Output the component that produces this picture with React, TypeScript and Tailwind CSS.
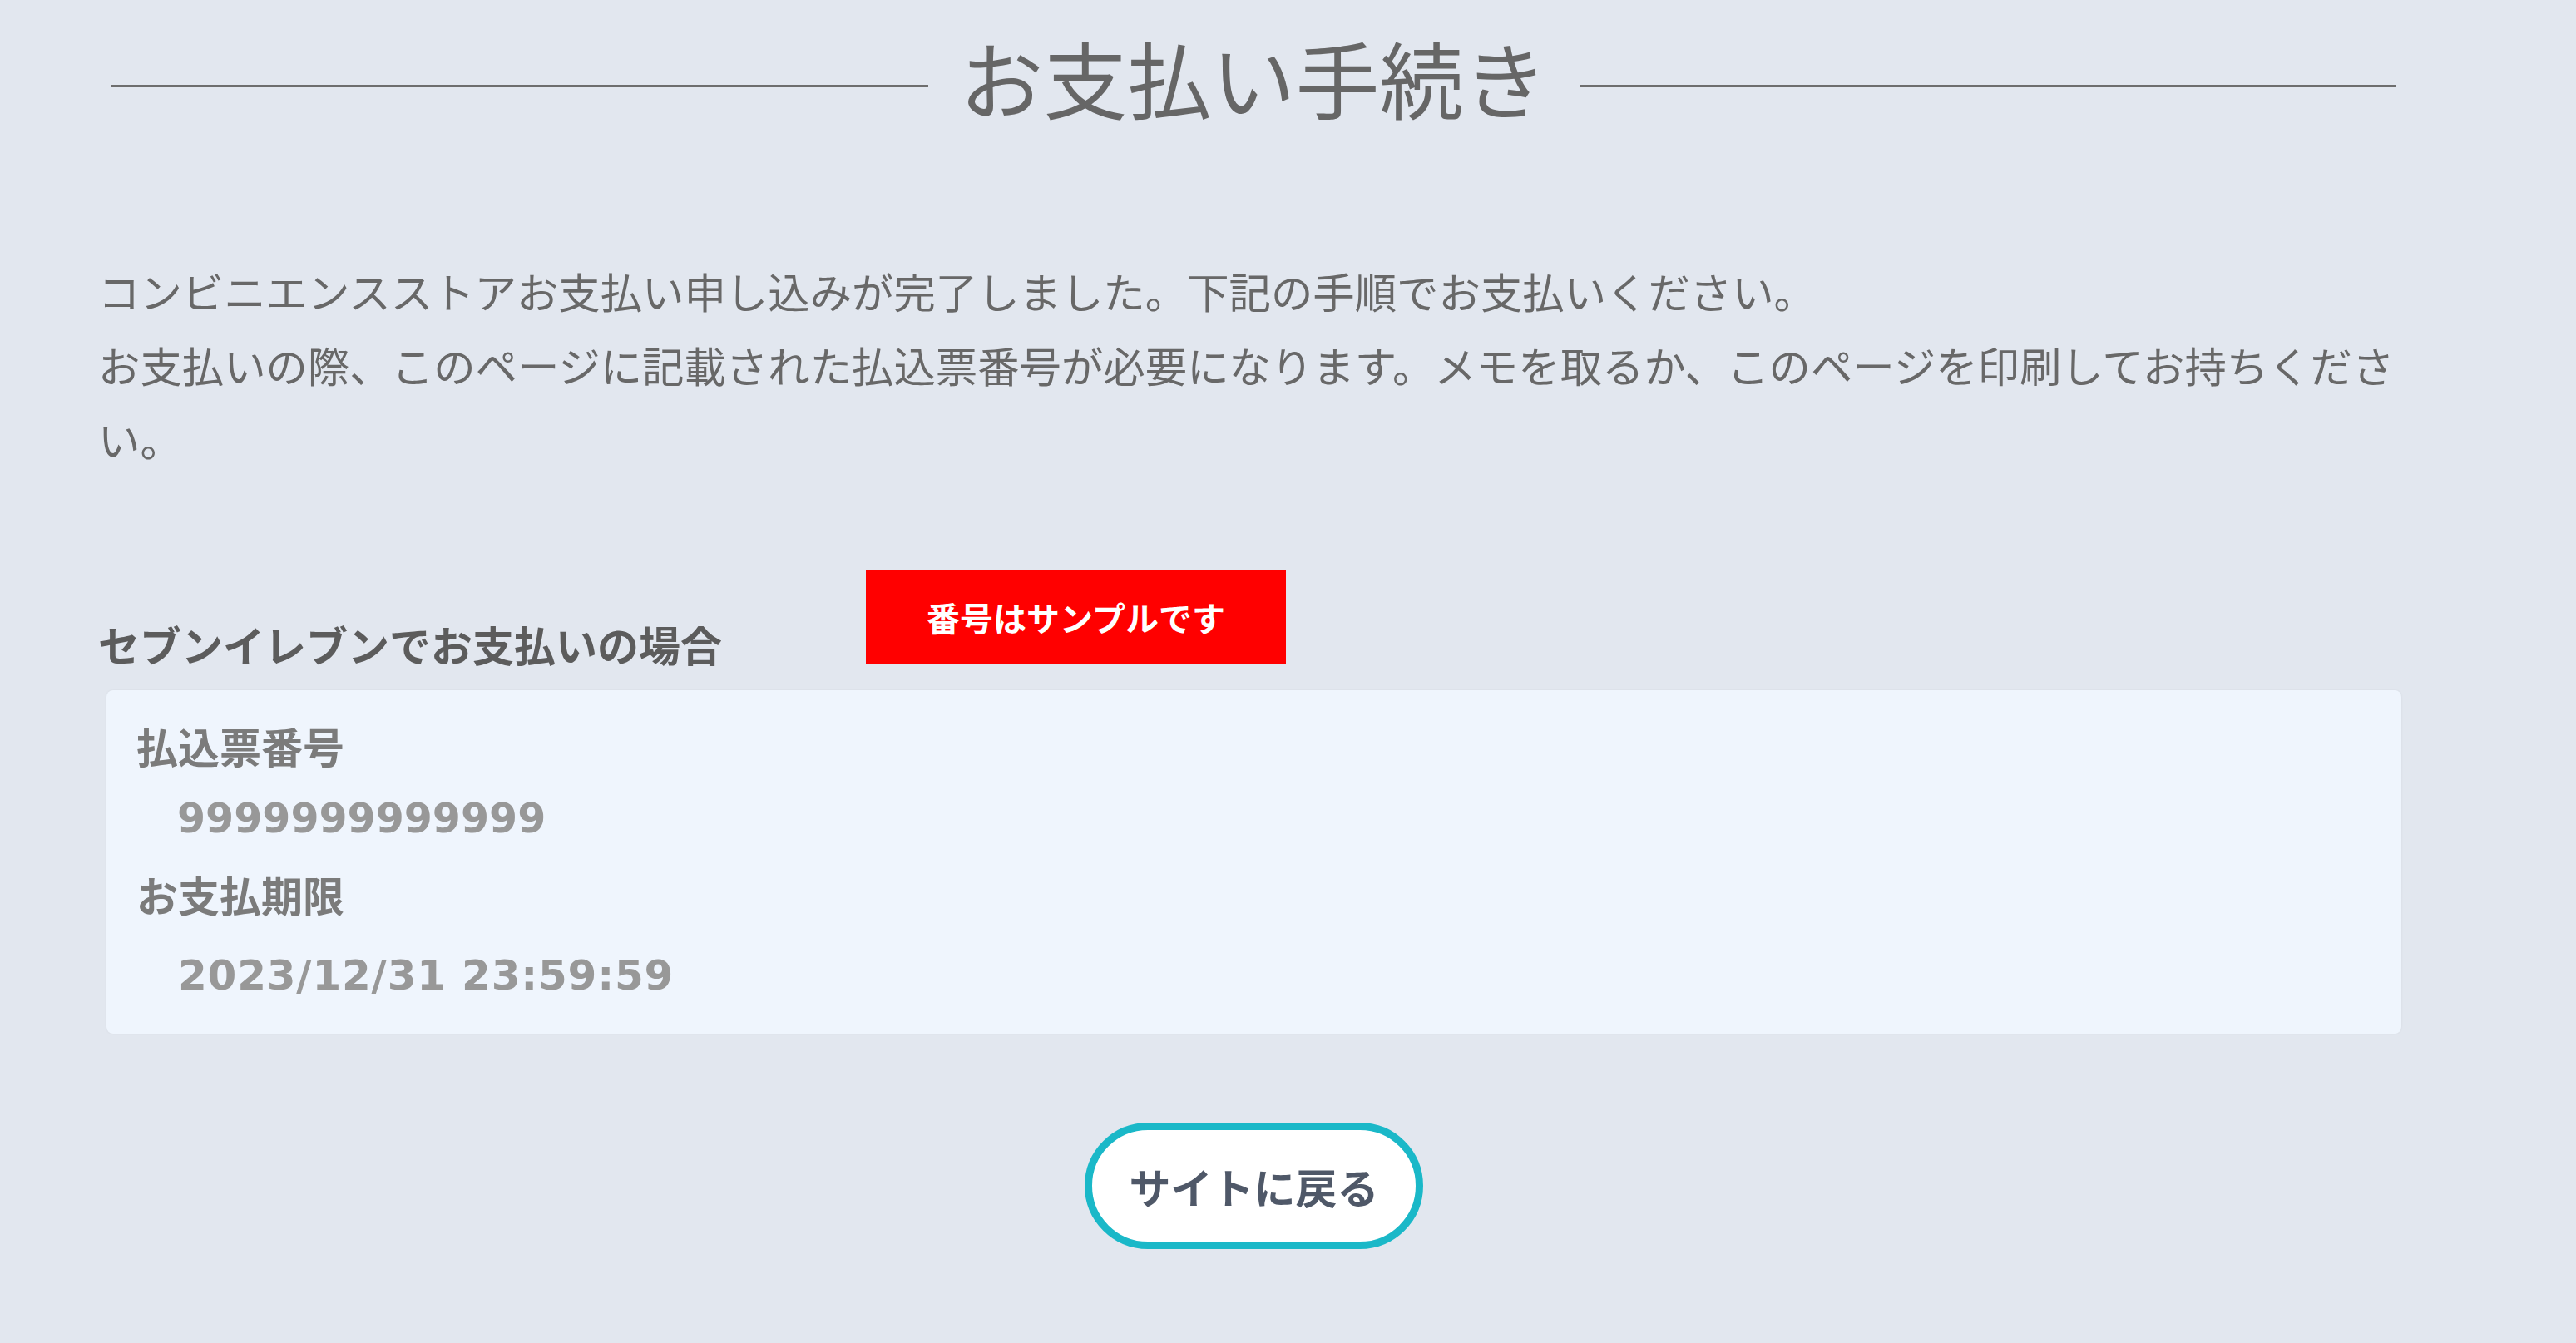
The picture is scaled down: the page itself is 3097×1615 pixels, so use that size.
import React from "react";

const jp = '"Noto Sans CJK JP", "Noto Sans", sans-serif';
const num = '"DejaVu Sans", "Noto Sans CJK JP", sans-serif';

export default function App() {
  return (
    <div className="min-h-[1615px] w-full bg-[#e2e7ef]" style={{ fontFamily: jp }}>
      <div className="ml-[118px] w-[2790px]">
        {/* Title */}
        <div className="ml-[16px] mr-[28px] flex items-start gap-[38px] pt-[17px]">
          <div className="mt-[85px] h-[3px] flex-1 bg-[#6e6e6e]" />
          <h1 className="text-[101px] leading-[150px] font-normal text-[#666666]">お支払い手続き</h1>
          <div className="mt-[85px] h-[3px] flex-1 bg-[#6e6e6e]" />
        </div>

        {/* Intro */}
        <p className="mt-[138px] text-[50.4px] leading-[89px] text-[#686868]">
          コンビニエンスストアお支払い申し込みが完了しました。下記の手順でお支払いください。
          <br />
          お支払いの際、このページに記載された払込票番号が必要になります。メモを取るか、このページを印刷してお持ちください。
        </p>

        {/* Section heading + badge */}
        <div className="mt-[114px] flex items-end">
          <h2 className="text-[50px] leading-[48px] font-bold text-[#5c5c5c]">セブンイレブンでお支払いの場合</h2>
          <div className="ml-[173px] flex h-[112px] w-[505px] items-center justify-center bg-[#ff0000] text-[40px] font-bold text-white">
            番号はサンプルです
          </div>
        </div>

        {/* Card */}
        <div className="mt-[32px] ml-[10px] w-[2759px] rounded-[8px] bg-[#eff5fd] pl-[36px] pt-[21px] pb-[18px] shadow-[0_0_3px_rgba(0,0,0,0.06)]">
          <div className="text-[50px] leading-[90px] font-bold text-[#7b7b7b]">払込票番号</div>
          <div className="ml-[49px] text-[49px] leading-[88px] font-bold text-[#989898]" style={{ fontFamily: num }}>
            9999999999999
          </div>
          <div className="text-[50px] leading-[92px] font-bold text-[#7b7b7b]">お支払期限</div>
          <div className="ml-[50px] text-[50px] leading-[104px] font-bold tracking-[0.8px] text-[#989898]" style={{ fontFamily: num }}>
            2023/12/31 23:59:59
          </div>
        </div>

        {/* Button */}
        <div className="mt-[107px] ml-[10px] flex w-[2759px] justify-center">
          <button className="flex h-[152px] w-[407px] items-center justify-center rounded-full border-[9px] border-[#1ab8c8] bg-white text-[50px] font-bold text-[#4f5868]">
            サイトに戻る
          </button>
        </div>
      </div>
    </div>
  );
}
